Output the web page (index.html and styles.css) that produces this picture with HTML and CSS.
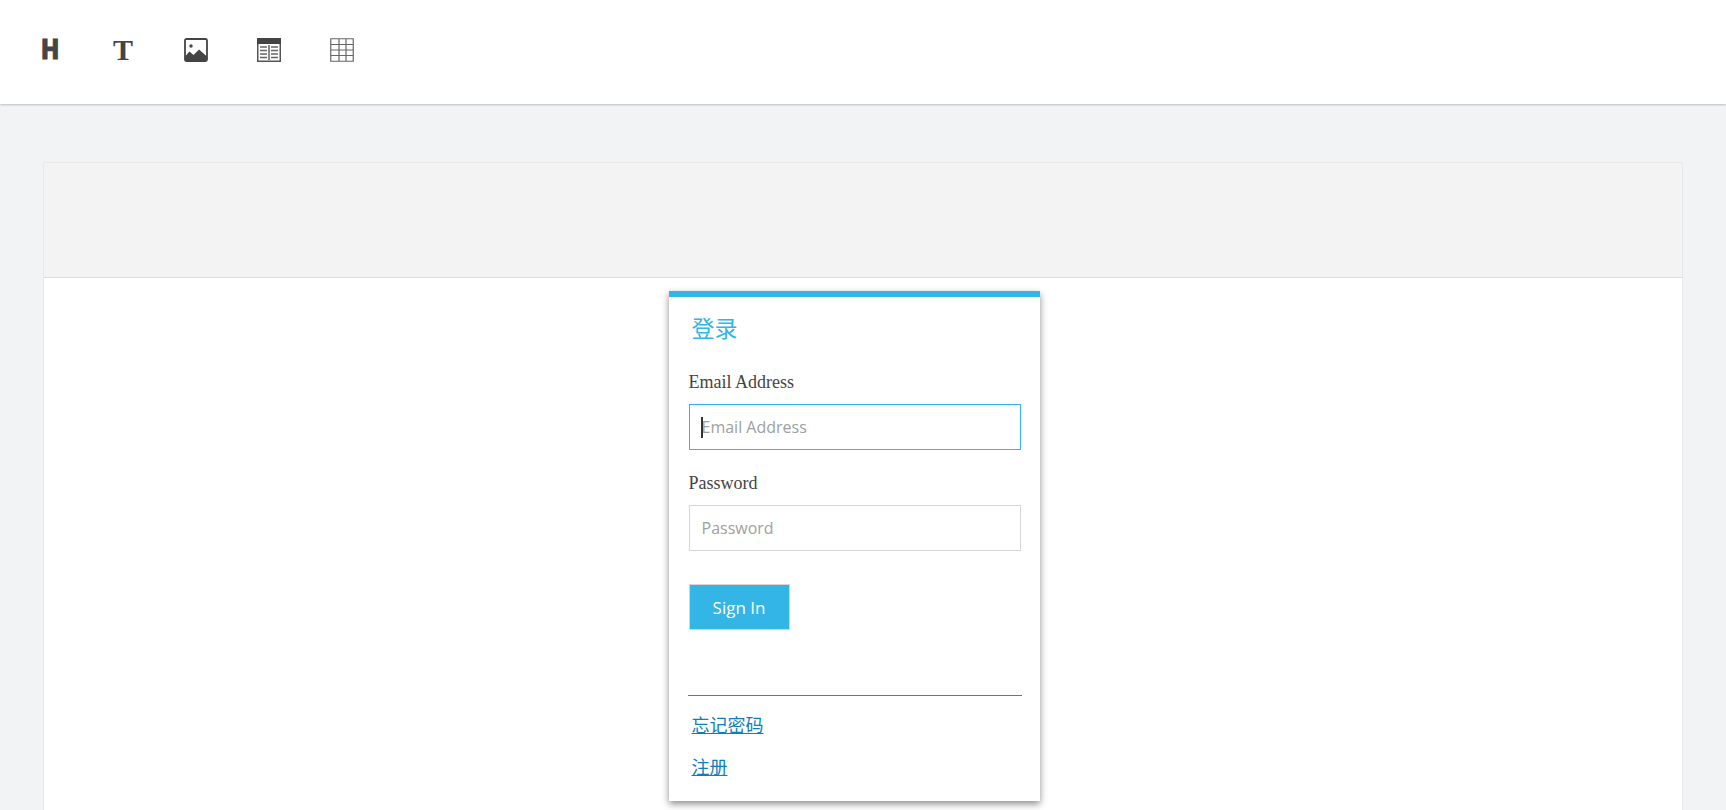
FILE: index.html
```html
<!DOCTYPE html>
<html>
<head>
    <title>Page Editor</title>
    <link rel="stylesheet" href="styles.css">
</head>
<body>
    <div class="toolbar">
        <span class="tool tool-h">H</span>
        <span class="tool tool-t">T</span>
        <span class="tool">
            <svg viewBox="0 0 24 24" width="24" height="24">
                <rect x="1" y="1" width="22" height="22" rx="1.5" fill="none" stroke="#444" stroke-width="1.8"/>
                <circle cx="7" cy="8" r="1.7" fill="#444"/>
                <path d="M1 23V18.5L5.5 13.5L9.5 17L15 11.5L23 18.5V23Z" fill="#444"/>
            </svg>
        </span>
        <span class="tool">
            <svg viewBox="0 0 24 24" width="24" height="24">
                <rect x="0.75" y="0.75" width="22.5" height="22.5" fill="none" stroke="#555" stroke-width="1.5"/>
                <rect x="0" y="0" width="24" height="6" fill="#444"/>
                <rect x="11" y="7" width="2" height="15" fill="#888"/>
                <path d="M3 9H10M14 9H21M3 12.5H10M14 12.5H21M3 16H10M14 16H21M3 19.5H10M14 19.5H21" stroke="#666" stroke-width="1.5" fill="none"/>
            </svg>
        </span>
        <span class="tool">
            <svg viewBox="0 0 24 24" width="24" height="24">
                <path d="M0.75 0.75H23.25V23.25H0.75ZM9 0.75V23.25M16 0.75V23.25M0.75 6.5H23.25M0.75 12H23.25M0.75 17.5H23.25" fill="none" stroke="#666" stroke-width="1.2"/>
            </svg>
        </span>
    </div>

    <div class="canvas">
        <div class="canvas-head"></div>
        <div class="canvas-body">
            <div class="login-card">
                <h3 class="login-title">登录</h3>
                <form class="login-form">
                    <label class="field-label">Email Address</label>
                    <div class="input-wrap">
                        <input type="text" class="field focused" placeholder="Email Address">
                        <span class="caret"></span>
                    </div>
                    <label class="field-label">Password</label>
                    <input type="password" class="field" placeholder="Password">
                    <button type="button" class="sign-in">Sign In</button>
                </form>
                <div class="login-links">
                    <a href="#">忘记密码</a>
                    <a href="#">注册</a>
                </div>
            </div>
        </div>
    </div>
</body>
</html>
```

FILE: styles.css
```css
/* Page */
body {
    margin: 0;
    height: 810px;
    overflow: hidden;
    background-color: #f2f3f5;
    font-family: "Liberation Serif", "Noto Sans CJK SC", serif;
}

/* Top toolbar */
.toolbar {
    box-sizing: border-box;
    display: flex;
    align-items: center;
    gap: 49px;
    height: 104px;
    padding: 0 0 4px 38px;
    background-color: #fff;
    box-shadow: 0 1px 2px rgba(0, 0, 0, 0.22);
}

.tool {
    display: flex;
    align-items: center;
    justify-content: center;
    width: 24px;
    height: 24px;
    color: #444;
    line-height: 24px;
}

.tool svg {
    display: block;
}

.tool-h {
    font-family: "DejaVu Sans", sans-serif;
    font-size: 26px;
    font-weight: 700;
    transform: scaleX(0.86);
    -webkit-text-stroke: 1px #444;
}

.tool-t {
    font-family: "Liberation Serif", serif;
    font-size: 30px;
    font-weight: 700;
}

/* Canvas panel */
.canvas {
    margin: 59px 44px 0;
    background-color: #fff;
    box-shadow: 0 0 1px rgba(0, 0, 0, 0.25);
}

.canvas-head {
    height: 114px;
    background-color: #f3f3f4;
    border-bottom: 1px solid #dcdcdc;
}

.canvas-body {
    display: flex;
    justify-content: center;
    padding: 13px 0 40px;
}

/* Login card */
.login-card {
    box-sizing: border-box;
    width: 371px;
    height: 510px;
    margin-right: 18px;
    padding: 0 19px 0 20px;
    background-color: #fff;
    border-top: 6px solid #33b5e5;
    box-shadow: 0 3px 7px rgba(0, 0, 0, 0.45);
}

.login-title {
    margin: 15px 0 0 3px;
    color: #33b5e5;
    font-family: "Noto Sans CJK SC", sans-serif;
    font-size: 23px;
    font-weight: 400;
    line-height: 30px;
}

.login-form {
    margin-top: 28px;
}

.field-label {
    display: block;
    color: #444;
    font-size: 18px;
    line-height: 24px;
}

.input-wrap {
    position: relative;
}

.field {
    display: block;
    box-sizing: border-box;
    width: 332px;
    height: 46px;
    margin: 10px 0 21px;
    padding: 0 12px;
    border: 1px solid #d6d6d6;
    border-radius: 0;
    outline: none;
    font-family: "Open Sans", sans-serif;
    font-size: 16px;
}

.field::placeholder {
    color: #a0a0a0;
}

.field.focused {
    border-color: #33b5e5;
}

.caret {
    position: absolute;
    left: 12px;
    top: 13px;
    width: 2px;
    height: 21px;
    background-color: #333;
}

.sign-in {
    display: block;
    box-sizing: border-box;
    width: 101px;
    height: 46px;
    margin-top: 33px;
    border: 1px solid #d6d6d6;
    background-color: #33b5e5;
    color: #fff;
    font-family: "Open Sans", sans-serif;
    font-size: 17px;
}

.login-links {
    display: flex;
    flex-direction: column;
    align-items: flex-start;
    gap: 18px;
    margin: 65px -1px 0 -1px;
    padding: 16px 4px 0;
    border-top: 1px solid #2a8cb8;
}

.login-links a {
    color: #0d7fc0;
    font-family: "Noto Sans CJK SC", sans-serif;
    font-size: 18px;
    line-height: 24px;
}
```
